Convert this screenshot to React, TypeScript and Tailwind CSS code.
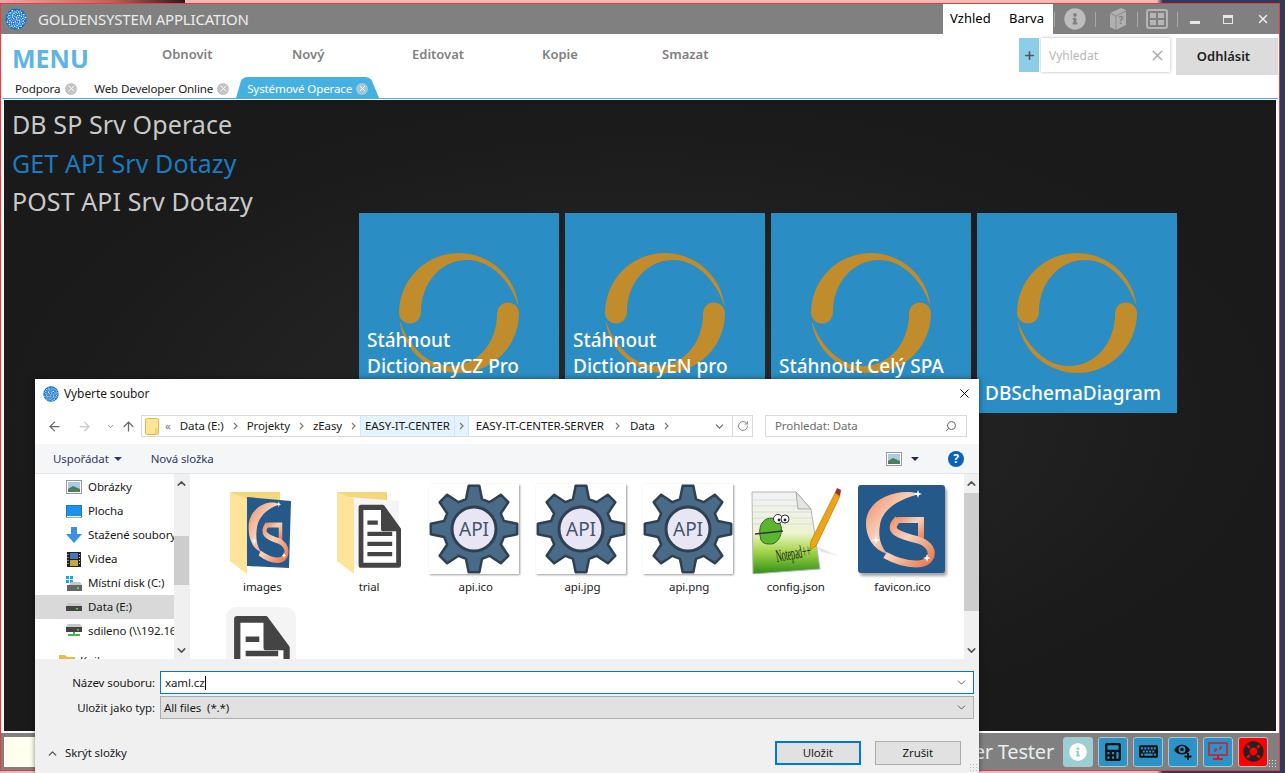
import { FC, ReactNode } from "react";
import { ArrowLeft, ArrowRight, ArrowUp, ChevronDown, ChevronUp, Plus, RotateCw, Search, X } from "lucide-react";
import { FaCalculator, FaInfoCircle, FaKeyboard, FaLifeRing } from "react-icons/fa";

const FONT = "font-['Noto_Sans','Open_Sans',sans-serif]";

const TOOLBAR_ITEMS = [
  { label: "Obnovit", width: "w-[130px]" },
  { label: "Nový", width: "w-[120px]" },
  { label: "Editovat", width: "w-[130px]" },
  { label: "Kopie", width: "w-[120px]" },
  { label: "Smazat", width: "w-[120px]" },
];

const TILES = [
  ["Stáhnout", "DictionaryCZ Pro", "\u00a0"],
  ["Stáhnout", "DictionaryEN pro", "\u00a0"],
  ["Stáhnout Celý SPA", "\u00a0"],
  ["DBSchemaDiagram"],
];

const gearPoints = (() => {
  const pts: string[] = [];
  for (let i = 0; i < 8; i++) {
    const a = (i * 45 - 90) * (Math.PI / 180);
    const d = Math.PI / 180;
    [
      [31, -15],
      [43.5, -7],
      [43.5, 7],
      [31, 15],
    ].forEach(([r, o]) => {
      pts.push(`${(45 + r * Math.cos(a + o * d)).toFixed(1)},${(45 + r * Math.sin(a + o * d)).toFixed(1)}`);
    });
  }
  return pts.join(" ");
})();

const specks = Array.from({ length: 70 }, (_, i) => ({
  x: 11.3 + 10.5 * Math.sqrt((i + 0.5) / 70) * Math.cos(i * 2.4),
  y: 11.3 + 10.5 * Math.sqrt((i + 0.5) / 70) * Math.sin(i * 2.4),
}));

const DotLogo: FC<{ size: number }> = ({ size }) => (
  <svg width={size} height={size} viewBox="0 0 24 24">
    <circle cx="12" cy="12" r="11.5" fill="#0a6ac4" />
    {specks.map((s, i) => (
      <rect key={i} x={s.x} y={s.y} width="1.5" height="1.5" fill={i % 2 === 0 ? "#fff" : "#8cc6f0"} />
    ))}
  </svg>
);

const RingLogo = () => (
  <svg className="absolute inset-0" width="200" height="200" viewBox="0 0 200 200">
    <path
      fill="#c18c2c"
      d="M40 100 A60 60 0 0 1 100 40 A60 60 0 0 1 159.5 93 C150 65 130 47 108 47 C82 47 62 70 62 99 A11 11 0 0 1 40 100 Z"
    />
    <path
      fill="#c18c2c"
      d="M160 100 A60 60 0 0 1 100 160 A60 60 0 0 1 40.5 107 C50 135 70 153 92 153 C118 153 138 130 138 101 A11 11 0 0 1 160 100 Z"
    />
  </svg>
);

// the CS logo, drawn as a mark rather than as letters
const CsMark: FC<{ id: string }> = ({ id }) => (
  <>
    <defs>
      <linearGradient id={id} x1="0" y1="0" x2="1" y2="1">
        <stop offset="0" stopColor="#ec8a60" />
        <stop offset="0.45" stopColor="#f8d2bc" />
        <stop offset="1" stopColor="#e8764a" />
      </linearGradient>
    </defs>
    <path d="M62 9 C40 2 8 14 8 38 C8 55 18 66 30 69 C22 62 20 50 22 40 C24 25 40 14 62 9 Z" fill={`url(#${id})`} />
    <path d="M39 32 H66 V55 H60 V38 H39 Z" fill={`url(#${id})`} />
    <path
      d="M40 34 C28 46 40 50 60 55 C78 60 78 79 58 79 C46 79 36 75 27 70"
      fill="none"
      stroke={`url(#${id})`}
      strokeWidth="7"
    />
    <path
      d="M18 51 l1 3 3 1 -3 1 -1 3 -1 -3 -3 -1 3 -1 Z M69 69 l1 3 3 1 -3 1 -1 3 -1 -3 -3 -1 3 -1 Z M60 5 l1 3 3 1 -3 1 -1 3 -1 -3 -3 -1 3 -1 Z"
      fill="#fff"
    />
  </>
);

const FolderIcon: FC<{ children: ReactNode }> = ({ children }) => (
  <svg width="90" height="90" viewBox="0 0 90 90">
    <path d="M13 8 H63 V30 H13 Z" fill="#f4d67f" />
    {children}
    <polygon points="13,8 30,15 30,90 13,77" fill="#fde498" />
  </svg>
);

const ImagesFolder = () => (
  <FolderIcon>
    <polygon points="30,13 74,17 72,84 30,82" fill="#25598a" />
    <g transform="translate(27 13) scale(0.58 0.8)">
      <CsMark id="cs-folder" />
    </g>
  </FolderIcon>
);

const DocGlyph = () => (
  <>
    <path d="M5 4 H32 L52 30 V72 H5 Z" fill="#fff" stroke="#444" strokeWidth="6" strokeLinejoin="round" />
    <path d="M32 4 L52 30 H32 Z" fill="#444" stroke="#444" strokeWidth="4" strokeLinejoin="round" />
    <path d="M13 22 H26 M13 35 H44 M13 47 H44 M13 59 H44" stroke="#444" strokeWidth="5" />
  </>
);

const TrialFolder = () => (
  <FolderIcon>
    <polygon points="24,13 75,17 75,80 24,82" fill="#f5f5f5" />
    <g transform="translate(33 20) scale(0.8 0.85)">
      <DocGlyph />
    </g>
  </FolderIcon>
);

const GearFile = () => (
  <div className="w-[90px] h-[90px] mr-[3px] bg-white shadow-[1px_1px_2px_rgba(0,0,0,0.4)]">
    <svg width="90" height="90" viewBox="0 0 90 90">
      <polygon points={gearPoints} fill="#4a6b87" stroke="#2e4051" strokeWidth="2.5" strokeLinejoin="round" />
      <circle cx="45" cy="45" r="22" fill="#e8e6f4" stroke="#2e4051" strokeWidth="3" />
      <text x="45" y="52" textAnchor="middle" fontSize="19" fontFamily="Noto Sans" fill="#44566c">
        API
      </text>
    </svg>
  </div>
);

const NotepadFile = () => (
  <svg width="90" height="90" viewBox="0 0 90 90">
    <defs>
      <linearGradient id="np-page" x1="0" y1="0" x2="0" y2="1">
        <stop offset="0" stopColor="#f2f2f4" />
        <stop offset="0.5" stopColor="#eef3d0" />
        <stop offset="0.72" stopColor="#a5d64a" />
        <stop offset="1" stopColor="#2f8f17" />
      </linearGradient>
    </defs>
    <path d="M65 62 L88 72 L70 68 Z" fill="#ddd" opacity="0.7" />
    <polygon points="1,8 45,8 60,25 69,85 2,90" fill="url(#np-page)" stroke="#b5b5b5" />
    <polygon points="45,8 60,25 47,25" fill="#e4e4e4" stroke="#aaa" />
    <path d="M2 16 H45 M2 22 H46 M2 28 H60 M2 34 H60 M2 40 H62" stroke="#c9d2e4" strokeWidth="0.7" />
    <path d="M10 56 C4 36 20 29 28 38 C34 46 28 60 20 60 C16 60 12 60 10 56 Z" fill="#5cb531" stroke="#2f6a19" />
    <circle cx="27" cy="35" r="4.5" fill="#fff" stroke="#333" />
    <circle cx="34" cy="35" r="4" fill="#fff" stroke="#333" />
    <circle cx="28" cy="36" r="1.4" fill="#222" />
    <circle cx="34" cy="36" r="1.4" fill="#222" />
    <path d="M4 50 L32 47" stroke="#333" strokeWidth="1.5" />
    <text fontSize="11" fontFamily="Liberation Serif" fill="#222" transform="translate(26 78) rotate(-10) scale(0.72 1.6)">
      Notepad++
    </text>
    <polygon points="60,57 84,9 89,12 65,62 59,66" fill="#eda511" stroke="#a86d05" strokeWidth="0.6" />
    <polygon points="84,9 86,4 90,6 89,12" fill="#9b2d35" />
  </svg>
);

const FaviconFile = () => (
  <div className="w-[87px] h-[88px] mr-[2px] rounded-[3px] bg-[#25598a] shadow-[2px_3px_3px_rgba(0,0,0,0.35)]">
    <svg width="87" height="88" viewBox="0 0 87 88">
      <CsMark id="cs-favicon" />
    </svg>
  </div>
);

const FILES = [
  { name: "images", icon: <ImagesFolder /> },
  { name: "trial", icon: <TrialFolder /> },
  { name: "api.ico", icon: <GearFile /> },
  { name: "api.jpg", icon: <GearFile /> },
  { name: "api.png", icon: <GearFile /> },
  { name: "config.json", icon: <NotepadFile /> },
  { name: "favicon.ico", icon: <FaviconFile /> },
];

const PicturesIcon = () => (
  <svg width="16" height="14" viewBox="0 0 16 14">
    <rect x="0.5" y="0.5" width="15" height="13" fill="#fff" stroke="#999" />
    <rect x="2" y="2" width="12" height="10" fill="#a9cbe3" />
    <path d="M2 9 L7 6 L14 9 V12 H2 Z" fill="#4e7d5a" />
  </svg>
);

const SIDEBAR = [
  {
    label: "Obrázky",
    icon: <PicturesIcon />,
  },
  {
    label: "Plocha",
    icon: (
      <svg width="16" height="13" viewBox="0 0 16 13">
        <rect width="16" height="12" fill="#1e90f0" stroke="#0b66b8" />
        <rect x="1" y="11" width="14" height="1" fill="#fff" />
      </svg>
    ),
  },
  {
    label: "Stažené soubory",
    icon: (
      <svg width="16" height="16" viewBox="0 0 16 16">
        <path d="M5 0 H11 V7 H16 L8 16 L0 7 H5 Z" fill="#3d8fe0" />
      </svg>
    ),
  },
  {
    label: "Videa",
    icon: (
      <svg width="14" height="15" viewBox="0 0 14 15">
        <rect width="14" height="15" fill="#222" />
        <rect x="3" y="1" width="8" height="6" fill="#3f78c0" />
        <rect x="3" y="8" width="8" height="6" fill="#c9a53a" />
        <path d="M1 2 V13" stroke="#ccc" strokeDasharray="1 2" />
        <path d="M12.5 2 V13" stroke="#ccc" strokeDasharray="1 2" />
      </svg>
    ),
  },
  {
    label: "Místní disk (C:)",
    icon: (
      <svg width="16" height="15" viewBox="0 0 16 15">
        <rect x="0" y="0" width="3" height="3" fill="#19a5e8" />
        <rect x="4" y="0" width="3" height="3" fill="#19a5e8" />
        <rect x="0" y="4" width="3" height="3" fill="#19a5e8" />
        <rect x="4" y="4" width="3" height="3" fill="#19a5e8" />
        <rect x="1" y="9" width="15" height="6" fill="#666" />
        <path d="M3 9 L5 6 H14 L16 9 Z" fill="#c8c8c8" />
        <rect x="11" y="11" width="2" height="2" fill="#3be03b" />
      </svg>
    ),
  },
  {
    label: "Data (E:)",
    icon: (
      <svg width="16" height="8" viewBox="0 0 16 8">
        <path d="M2 0 H14 L16 3 H0 Z" fill="#c8c8c8" />
        <rect y="3" width="16" height="5" fill="#444" />
        <rect x="10" y="5" width="2" height="1.5" fill="#3be03b" />
      </svg>
    ),
  },
  {
    label: "sdileno (\\\\192.168.1.1)",
    icon: (
      <svg width="16" height="14" viewBox="0 0 16 14">
        <path d="M2 0 H14 L16 3 H0 Z" fill="#c8c8c8" />
        <rect y="3" width="16" height="5" fill="#444" />
        <rect x="11" y="5" width="2" height="1.5" fill="#3be03b" />
        <path d="M7 8 H9 V10 H14 V12 H2 V10 H7 Z" fill="#45b649" />
      </svg>
    ),
  },
];

const CRUMBS = ["Data (E:)", "Projekty", "zEasy"];

const Chevron = () => (
  <svg width="5" height="8" viewBox="0 0 5 8" className="shrink-0">
    <path d="M1 1 L4 4 L1 7" fill="none" stroke="#777" strokeWidth="1.2" />
  </svg>
);

const CloseDot: FC<{ bg?: string }> = ({ bg = "bg-[#c4c4c4]" }) => (
  <span className={`w-[12px] h-[12px] rounded-full flex items-center justify-center ${bg}`}>
    <X size={9} strokeWidth={2.5} className="text-white" />
  </span>
);

const TitleSep: FC<{ margin: string }> = ({ margin }) => <span className={`w-px h-[15px] bg-[#a8a8a8] ${margin}`} />;

const FooterButton: FC<{ bg?: string; children: ReactNode }> = ({ bg = "bg-[#2a93c8]", children }) => (
  <div className={`w-[30px] h-[30px] rounded-[3px] border border-[#b5c4cc] flex items-center justify-center ${bg}`}>
    {children}
  </div>
);

const TitleBar = () => (
  <div className="h-[30px] bg-[#808080] flex items-center shrink-0">
    <div className="ml-[4px]">
      <DotLogo size={22} />
    </div>
    <span className="ml-[11px] text-[15px] text-[#ececec] tracking-[-0.2px]">GOLDENSYSTEM APPLICATION</span>
    <div className="ml-auto h-full w-[110px] bg-white flex items-center justify-between pl-[7px] pr-[9px] text-[13px] text-black">
      <span>Vzhled</span>
      <span>Barva</span>
    </div>
    <div className="flex items-center h-full">
      <TitleSep margin="ml-[1px]" />
      <FaInfoCircle size={22} className="ml-[9px] text-[#bdbdbd]" />
      <TitleSep margin="ml-[9px]" />
      <svg width="20" height="22" viewBox="0 0 18 22" className="ml-[12px]">
        <path d="M1 5 L12 0 L17 2 V17 L7 22 L1 19 Z" fill="#b0b0b0" />
        <path d="M1 5 L7 8 L17 3 M7 8 V22" fill="none" stroke="#8a8a8a" />
        <text x="12" y="16" textAnchor="middle" fontSize="10" fontWeight="700" fill="#808080" fontFamily="Noto Sans">
          ?
        </text>
      </svg>
      <TitleSep margin="ml-[9px]" />
      <svg width="22" height="20" viewBox="0 0 22 20" className="ml-[8px]">
        <rect x="1" y="1" width="20" height="18" rx="2" fill="none" stroke="#b5b5b5" strokeWidth="2" />
        <rect x="4" y="4" width="6" height="5" fill="#b5b5b5" />
        <rect x="12" y="4" width="6" height="5" fill="#b5b5b5" />
        <rect x="4" y="11" width="6" height="5" fill="#b5b5b5" />
        <rect x="12" y="11" width="6" height="5" fill="#b5b5b5" />
      </svg>
      <TitleSep margin="ml-[9px]" />
      <span className="ml-[12px] mt-[7px] w-[10px] h-[3px] bg-[#e6e6e6]" />
      <span className="ml-[23px] w-[10px] h-[9px] border border-t-[3px] border-[#e6e6e6]" />
      <X size={14} strokeWidth={2.5} className="ml-[23px] text-[#ececec]" />
      <span className="w-[9px]" />
    </div>
  </div>
);

const Toolbar = () => (
  <div className="h-[42px] bg-white flex shrink-0">
    <span className="ml-[11px] mt-[5px] w-[150px] text-[25px] leading-[38px] font-bold text-[#5eb4e4]">MENU</span>
    <div className="flex mt-[11px] text-[13px] font-semibold text-[#808080]">
      {TOOLBAR_ITEMS.map((item) => (
        <span key={item.label} className={item.width}>
          {item.label}
        </span>
      ))}
    </div>
    <div className="ml-auto flex mt-[4px] h-[37px] mr-[1px]">
      <div className="w-[20px] h-[34px] bg-[#8ccde8] flex items-center justify-center">
        <Plus size={13} strokeWidth={3} className="text-[#555]" />
      </div>
      <div className="ml-[2px] w-[129px] h-[34px] bg-white shadow-[0_0_3px_rgba(0,0,0,0.3)] flex items-center justify-between pl-[8px] pr-[4px]">
        <span className="text-[12px] text-[#b8b8b8] mt-[2px]">Vyhledat</span>
        <X size={17} strokeWidth={2} className="text-[#aaa]" />
      </div>
      <div className="ml-[6px] w-[102px] bg-[#dcdcdc] flex items-center justify-center pr-[7px] text-[13px] font-semibold text-[#222]">
        Odhlásit
      </div>
    </div>
  </div>
);

const TabBar = () => (
  <div className="h-[22px] bg-white flex items-center pt-[3px] text-[11.6px] text-[#222] shrink-0 tracking-[-0.15px]">
    <span className="ml-[14px]">Podpora</span>
    <span className="ml-[5px]">
      <CloseDot />
    </span>
    <span className="ml-[17px]">Web Developer Online</span>
    <span className="ml-[4px]">
      <CloseDot />
    </span>
    <div className="ml-[7px] -mt-[3px] pt-[3px] relative w-[143px] h-[22px] flex items-center">
      <svg className="absolute inset-0" width="143" height="22" viewBox="0 0 143 22">
        <path d="M0 22 L5 5 Q7 1 12 1 H128 Q134 1 136 5 L143 22 Z" fill="#45b0e2" />
      </svg>
      <span className="relative ml-[11px] text-white">Systémové Operace</span>
      <span className="relative ml-[4px]">
        <CloseDot bg="bg-[#a6c6d8]" />
      </span>
    </div>
  </div>
);

const Tile: FC<{ lines: string[] }> = ({ lines }) => (
  <div className="relative w-[200px] h-[200px] bg-[#2a8dc3] flex flex-col justify-end pl-[8px] pb-[7px]">
    <RingLogo />
    {lines.map((line, i) => (
      <span key={i} className="relative text-[19px] leading-[26.5px] font-medium text-white whitespace-nowrap">
        {line}
      </span>
    ))}
  </div>
);

const Content = () => (
  <div className="flex-1 min-h-0 border-x-[3px] border-b-2 border-white">
    <div className="h-full border-t border-[#45b0e2] -mx-[2px] pt-px px-[2px] bg-white">
      <div className="h-full bg-[radial-gradient(ellipse_at_center,#2a2a2a_0%,#1a1a1a_70%)] flex">
        <div className="w-[355px] pl-[8px] pt-[5px] flex flex-col text-[25px] leading-[38.5px] text-[#c9c9c9] tracking-[0.1px] whitespace-nowrap">
          <span>DB SP Srv Operace</span>
          <span className="text-[#1a7cc0]">GET API Srv Dotazy</span>
          <span>POST API Srv Dotazy</span>
        </div>
        <div className="flex gap-[6px] mt-[113px] items-start">
          {TILES.map((lines, i) => (
            <Tile key={i} lines={lines} />
          ))}
        </div>
      </div>
    </div>
  </div>
);

const Footer = () => (
  <div className="h-[37px] bg-[#808080] flex items-center pl-[3px] pr-[11px] shrink-0 relative">
    <div className="w-[32px] h-[30px] bg-[#fffff0]" />
    <span className="ml-auto mr-[9px] text-[20px] text-[#e8eef0] tracking-[-0.2px]">Developer Tester</span>
    <div className="flex gap-[5px]">
      <FooterButton bg="bg-[#9ccfd2]">
        <FaInfoCircle size={18} className="text-white" />
      </FooterButton>
      <FooterButton>
        <FaCalculator size={18} className="text-[#111]" />
      </FooterButton>
      <FooterButton>
        <FaKeyboard size={19} className="text-[#111]" />
      </FooterButton>
      <FooterButton>
        <svg width="20" height="17" viewBox="0 0 20 17">
          <path d="M1 7 C5 0 13 0 17 7 C13 13 5 13 1 7 Z" fill="#111" />
          <circle cx="9" cy="6.5" r="3.5" fill="#2a93c8" />
          <circle cx="9" cy="6.5" r="1.8" fill="#111" />
          <path d="M15 10 V17 M11.5 13.5 H18.5" stroke="#111" strokeWidth="2" />
        </svg>
      </FooterButton>
      <FooterButton>
        <svg width="20" height="19" viewBox="0 0 20 19">
          <rect x="1" y="1" width="18" height="12" fill="none" stroke="#e0141a" strokeWidth="1.5" />
          <path d="M10 13 V16 M5 17 H15" stroke="#e0141a" strokeWidth="2" />
          <path d="M6 10 L9 8 M8 6 V8 H6 M14 4 L11 6 M12 8 V6 H14" fill="none" stroke="#e0141a" />
        </svg>
      </FooterButton>
      <FooterButton bg="bg-[#ff0000]">
        <FaLifeRing size={21} className="text-[#222]" />
      </FooterButton>
    </div>
    <div className="absolute right-[1px] bottom-[1px] w-[10px] h-[10px] bg-[radial-gradient(#ddd_1px,transparent_1px)] bg-[length:3px_3px]" />
  </div>
);

const ScrollBar: FC<{ thumb: string }> = ({ thumb }) => (
  <div className="w-[15px] h-full bg-[#f0f0f0] flex flex-col items-center">
    <ChevronUp size={13} strokeWidth={3} className="text-[#555] mt-[3px] shrink-0" />
    <div className={`w-full bg-[#cdcdcd] ${thumb}`} />
    <ChevronDown size={13} strokeWidth={3} className="text-[#555] mt-auto mb-[2px] shrink-0" />
  </div>
);

const Dialog = () => (
  <div className="absolute left-[35px] top-[379px] w-[944px] h-[394px] bg-white shadow-[0_0_5px_rgba(0,0,0,0.5)] flex flex-col text-[11.5px] text-[#1a1a1a] tracking-[-0.1px]">
    <div className="h-[29px] flex items-center shrink-0">
      <div className="ml-[8px]">
        <DotLogo size={16} />
      </div>
      <span className="ml-[5px] text-[12px]">Vyberte soubor</span>
      <X size={15} strokeWidth={1.5} className="ml-auto mr-[7px] text-black" />
    </div>
    <div className="h-[36px] flex items-center shrink-0">
      <ArrowLeft size={15} strokeWidth={2} className="ml-[12px] text-[#666]" />
      <ArrowRight size={15} strokeWidth={2} className="ml-[15px] text-[#c8c8c8]" />
      <ChevronDown size={9} strokeWidth={2.5} className="ml-[14px] text-[#888]" />
      <ArrowUp size={15} strokeWidth={2} className="ml-[6px] text-[#666]" />
      <div className="ml-[5px] w-[612px] h-[22px] border border-[#d9d9d9] flex items-center">
        <svg width="14" height="17" viewBox="0 0 14 17" className="ml-[3px]">
          <rect x="0.5" y="0.5" width="13" height="16" rx="1" fill="#fde498" stroke="#e0b84a" />
          <rect x="10" y="10" width="3.5" height="6.5" fill="#f6d36b" />
        </svg>
        <span className="ml-[6px] text-[#777]">«</span>
        {CRUMBS.map((c) => (
          <span key={c} className="flex items-center">
            <span className="ml-[9px] mr-[9px]">{c}</span>
            <Chevron />
          </span>
        ))}
        <span className="ml-[4px] h-full bg-[#e5f3ff] border-x border-[#cce8ff] flex items-center px-[4px]">EASY-IT-CENTER</span>
        <span className="h-full w-[14px] bg-[#e5f3ff] border-r border-[#cce8ff] flex items-center justify-center">
          <Chevron />
        </span>
        <span className="ml-[7px] mr-[11px]">EASY-IT-CENTER-SERVER</span>
        <Chevron />
        <span className="ml-[10px] mr-[9px]">Data</span>
        <Chevron />
        <ChevronDown size={13} strokeWidth={2} className="ml-auto mr-[6px] text-[#666]" />
        <span className="h-full w-[20px] border-l border-[#d9d9d9] flex items-center justify-center">
          <RotateCw size={12} strokeWidth={2} className="text-[#888]" />
        </span>
      </div>
      <div className="ml-[12px] w-[202px] h-[22px] border border-[#d9d9d9] flex items-center justify-between px-[9px] text-[#6d6d6d]">
        <span>Prohledat: Data</span>
        <Search size={12} strokeWidth={2} className="text-[#666] -scale-x-100" />
      </div>
    </div>
    <div className="h-[30px] bg-[#f5f6f7] border-b border-[#e5e5e5] flex items-center text-[#2b3a66] shrink-0">
      <span className="ml-[18px]">Uspořádat</span>
      <span className="ml-[5px] border-x-[4px] border-x-transparent border-t-[4px] border-t-[#2b3a66]" />
      <span className="ml-[29px]">Nová složka</span>
      <span className="ml-auto">
        <PicturesIcon />
      </span>
      <span className="ml-[9px] border-x-[4px] border-x-transparent border-t-[4px] border-t-[#1d2b50]" />
      <span className="ml-[29px] mr-[15px] w-[16px] h-[16px] rounded-full bg-[#0a62bb] text-white font-bold text-[12px] flex items-center justify-center">
        ?
      </span>
    </div>
    <div className="h-[185px] flex shrink-0">
      <div className="w-[139px] overflow-hidden pt-[1px] shrink-0">
        {SIDEBAR.map((item) => (
          <div
            key={item.label}
            className={`h-[24px] flex items-center whitespace-nowrap ${item.label === "Data (E:)" ? "bg-[#d9d9d9]" : ""}`}
          >
            <span className="w-[16px] ml-[31px] flex justify-center">{item.icon}</span>
            <span className="ml-[6px]">{item.label}</span>
          </div>
        ))}
        <div className="h-[24px] flex items-center mt-[6px]">
          <svg width="16" height="13" viewBox="0 0 16 13" className="ml-[24px]">
            <path d="M0 0 H6 L8 2 H16 V13 H0 Z" fill="#e9b949" />
          </svg>
          <span className="ml-[5px]">Knihovny</span>
        </div>
      </div>
      <ScrollBar thumb="h-[49px] mt-[46px]" />
      <div className="flex-1 min-w-0 overflow-hidden pl-[19px] pt-[10px] border-l border-[#f0f0f0]">
        <div className="grid grid-cols-[repeat(7,106.7px)]">
          {FILES.map((file) => (
            <div key={file.name} className="h-[123px] flex flex-col items-center">
              <div className="h-[90px] flex items-center">{file.icon}</div>
              <span className="mt-[4px]">{file.name}</span>
            </div>
          ))}
          <svg width="70" height="90" viewBox="0 0 70 90" className="ml-[17px]">
            <rect x="0" y="0" width="70" height="90" rx="10" fill="#f4f4f4" />
            <g transform="translate(6 8) scale(1.05 1.1)">
              <DocGlyph />
            </g>
          </svg>
        </div>
      </div>
      <ScrollBar thumb="h-[118px] mt-[3px]" />
    </div>
    <div className="flex-1 bg-[#f0f0f0] relative">
      <div className="flex items-center mt-[12px]">
        <span className="w-[120px] text-right">Název souboru:</span>
        <div className="ml-[5px] w-[814px] h-[23px] bg-white border border-[#0078d7] flex items-center pl-[4px] pr-[5px]">
          <span>xaml.cz</span>
          <span className="w-px h-[14px] bg-black" />
          <ChevronDown size={13} strokeWidth={1.5} className="ml-auto text-[#444]" />
        </div>
      </div>
      <div className="flex items-center mt-[2px]">
        <span className="w-[120px] text-right">Uložit jako typ:</span>
        <div className="ml-[5px] w-[814px] h-[23px] bg-[#e1e1e1] border border-[#adadad] flex items-center pl-[3px] pr-[5px]">
          <span>All files&nbsp; (*.*)</span>
          <ChevronDown size={13} strokeWidth={1.5} className="ml-auto text-[#444]" />
        </div>
      </div>
      <div className="flex items-center mt-[22px]">
        <ChevronUp size={13} strokeWidth={2.5} className="ml-[11px] text-[#555]" />
        <span className="ml-[6px]">Skrýt složky</span>
        <div className="ml-[648px] w-[86px] h-[24px] bg-[#e1e1e1] border-2 border-[#0078d7] flex items-center justify-center">
          Uložit
        </div>
        <div className="ml-[14px] w-[86px] h-[24px] bg-[#e1e1e1] border border-[#adadad] flex items-center justify-center">
          Zrušit
        </div>
      </div>
      <div className="absolute right-[2px] bottom-[2px] w-[8px] h-[8px] bg-[radial-gradient(#bbb_1px,transparent_1px)] bg-[length:3px_3px]" />
    </div>
  </div>
);

const App: FC = () => {
  return (
    <div className={`relative w-full h-[773px] overflow-hidden ${FONT} bg-[linear-gradient(90deg,#f4b8b8_0%,#f4b8b8_90%,#2e3b5c_90.5%)]`}>
      <div className="h-[3px] w-[185px] bg-[linear-gradient(90deg,#f4a5a5,#c06060_60%,#2a1a20)]" />
      <div className="w-[1280px] h-[768px] border border-[#f03a3a] flex flex-col">
        <TitleBar />
        <Toolbar />
        <TabBar />
        <Content />
        <Footer />
      </div>
      <Dialog />
    </div>
  );
};

export default App;
